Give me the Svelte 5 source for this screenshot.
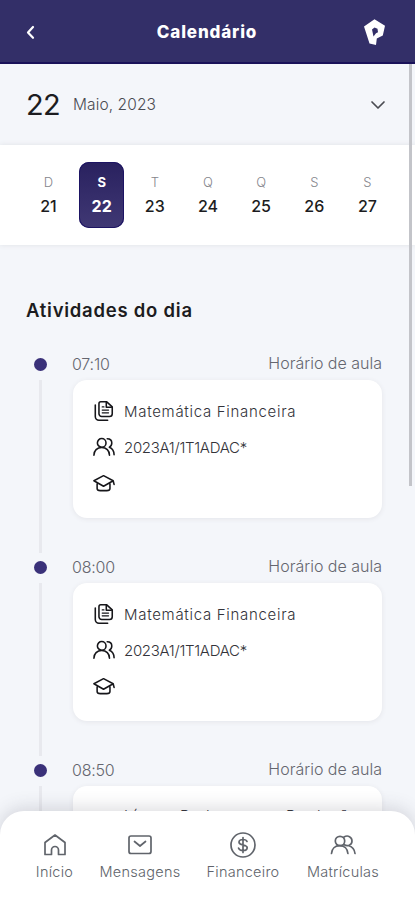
<script lang="ts">
    // Days shown in the week strip
    const days = [
        { letter: "D", number: 21 },
        { letter: "S", number: 22 },
        { letter: "T", number: 23 },
        { letter: "Q", number: 24 },
        { letter: "Q", number: 25 },
        { letter: "S", number: 26 },
        { letter: "S", number: 27 },
    ];

    let selected = $state(22);

    // long subjects wrap to a second line and need a taller row
    const activities = [
        { time: "07:10", subject: "Matemática Financeira", group: "2023A1/1T1ADAC*", long: false },
        { time: "08:00", subject: "Matemática Financeira", group: "2023A1/1T1ADAC*", long: false },
        { time: "08:50", subject: "Língua Portuguesa e Produção de Textos", group: "", long: true },
    ];
</script>

<div class="screen">
    <header>
        <button class="back" aria-label="Voltar">
            <svg width="10" height="16" viewBox="0 0 10 16"><path d="M8 3 3 8.500l5 5.300" /></svg>
        </button>
        <h1>Calendário</h1>
        <svg class="logo" width="24" height="28" viewBox="0 0 24 28">
            <path fill-rule="evenodd" d="M12.500 1.200 23 7.700 20.800 17.500 14.800 20.500 14 27 7.500 25.500 2 8.500ZM10 11.500 11.500 18.500 14 15.200 16 14.200 15.500 10.800 12.500 9.500Z" />
        </svg>
    </header>

    <div class="month">
        <span class="day-big">22</span>
        <span class="month-name">Maio, 2023</span>
        <svg width="16" height="10" viewBox="0 0 16 10"><path d="M2 2l6 6 6-6" /></svg>
    </div>

    <div class="week">
        {#each days as day}
            <button class="day" class:active={day.number === selected} onclick={() => (selected = day.number)}>
                <span class="letter">{day.letter}</span>
                <span class="number">{day.number}</span>
            </button>
        {/each}
    </div>

    <main>
        <h2>Atividades do dia</h2>
        {#each activities as activity}
            <section class="activity">
                <div class="rail">
                    <span class="dot"></span>
                    <span class="line"></span>
                </div>
                <div class="body">
                    <div class="top">
                        <span class="time">{activity.time}</span>
                        <span class="kind">Horário de aula</span>
                    </div>
                    <div class="card">
                        <div class="row" class:tall={activity.long}>
                            <svg width="22" height="22" viewBox="0 0 24 24">
                                <path d="M8.500 2H15l6 5.500V15a3 3 0 0 1-3 3H9.500a3 3 0 0 1-3-3V4a2 2 0 0 1 2-2Z" />
                                <path d="M14.500 2.500V8H20M2.500 5.500V18a4 4 0 0 0 4 4H16" />
                                <path class="thin" d="M10 7.500h2M10 11h7M10 14h7" />
                            </svg>
                            <span class="subject">{activity.subject}</span>
                        </div>
                        <div class="row">
                            <svg width="22" height="22" viewBox="0 0 24 24">
                                <circle cx="9.500" cy="7.500" r="4.700" />
                                <path d="M1 21c0-5 3.500-8.500 8.500-8.500S18 16 18 21M15.500 3c3 0 5 2 5 4.700 0 2.200-1.200 3.800-2.700 4.500 3.200 1.300 5.200 4.300 5.200 8.300" />
                            </svg>
                            {#if activity.group}
                                <span class="group">{activity.group}</span>
                            {/if}
                        </div>
                        <div class="row">
                            <svg width="22" height="22" viewBox="0 0 24 24">
                                <path d="M1 9.500 11.500 4 22 9.500 11.500 15.500ZM22 9.500l1 4M4.500 12.500v5.500c0 1.500 2 2.300 3.500 2.300h7c1.500 0 3.500-.8 3.500-2.300v-5.500" />
                            </svg>
                        </div>
                    </div>
                </div>
            </section>
        {/each}
    </main>

    <div class="scrollbar"></div>

    <nav>
        <a class="home" href="#inicio">
            <svg width="28" height="28" viewBox="0 0 28 28">
                <path d="M4 11.500 14 4l10 7.500V23.500h-6.500V19a3.500 3.500 0 0 0-7 0v4.500H4Z" />
            </svg>
            <span>Início</span>
        </a>
        <a class="messages" href="#mensagens">
            <svg width="28" height="28" viewBox="0 0 28 28">
                <rect x="3" y="5" width="22" height="17.500" rx="2" />
                <path d="M8.500 10.500 14 15l5.500-4.500" />
            </svg>
            <span>Mensagens</span>
        </a>
        <a class="finance" href="#financeiro">
            <svg width="28" height="28" viewBox="0 0 28 28">
                <circle cx="14" cy="14" r="12" />
                <path d="M18 10.500c-.5-1.500-2-2-4-2s-4 .8-4 2.700c0 3.800 8.200 1.800 8.200 5.500 0 2-1.800 2.800-4.200 2.800s-4-.8-4.500-2.500M14 6.500v15" />
            </svg>
            <span>Financeiro</span>
        </a>
        <a class="enroll" href="#matriculas">
            <svg width="28" height="28" viewBox="0 0 28 28">
                <circle cx="11" cy="10" r="4.700" />
                <path d="M2.500 22.500c.3-4.500 3.500-7.800 8.200-7.800s7.900 3.300 8.200 7.800M15 6c4-2.500 8 .2 8 4 0 4.200-4.500 6-8 3.500M20 14.800c3.500 1 5.500 3.800 6 7.700" />
            </svg>
            <span>Matrículas</span>
        </a>
    </nav>
</div>

<style>
    :global(body) {
        margin: 0;
    }

    .screen {
        position: relative;
        width: 415px;
        height: 900px;
        overflow: hidden;
        background: #f4f6fa;
        font-family: Inter, "Liberation Sans", sans-serif;
        color: #1c1c20;
    }

    svg {
        flex: none;
        fill: none;
        stroke: currentColor;
        stroke-width: 1.7;
        stroke-linecap: round;
        stroke-linejoin: round;
    }

    button {
        border: 0;
        padding: 0;
        background: none;
        font: inherit;
        color: inherit;
    }

    header {
        display: flex;
        align-items: center;
        justify-content: space-between;
        box-sizing: border-box;
        height: 64px;
        padding: 2px 29px 0 25px;
        background: #332f68;
        border-bottom: 2px solid #1a1259;
        color: #fff;
    }

    .back {
        display: flex;
        width: 27px;
    }

    .back svg {
        stroke-width: 2.2;
    }

    h1 {
        margin: 0;
        font-size: 17px;
        font-weight: 800;
        letter-spacing: 0.85px;
    }

    .logo {
        fill: #fff;
        stroke: none;
    }

    .month {
        display: flex;
        align-items: center;
        box-sizing: border-box;
        height: 81px;
        padding: 0 29px 0 26px;
    }

    .month svg {
        color: #4a4b52;
    }

    .day-big {
        width: 47px;
        font-size: 29px;
        letter-spacing: -0.6px;
    }

    .month-name {
        flex: 1;
        font-size: 15.5px;
        font-weight: 300;
        letter-spacing: 0.1px;
        color: #4a4b52;
    }

    .week {
        display: flex;
        justify-content: space-between;
        align-items: center;
        box-sizing: border-box;
        height: 100px;
        padding: 0 25px 0 26px;
        background: #fff;
        box-shadow: 0 0 5px #dfe1e6;
    }

    .day {
        display: flex;
        flex-direction: column;
        align-items: center;
        box-sizing: border-box;
        width: 45px;
        height: 66px;
        padding-top: 11px;
        border-radius: 10px;
    }

    .letter {
        font-size: 13px;
        line-height: 18px;
        font-weight: 300;
        color: #85858c;
    }

    .number {
        margin-top: 5px;
        font-size: 16px;
        line-height: 20px;
        font-weight: 500;
    }

    .active {
        background: linear-gradient(#29215f, #403874);
        box-shadow: inset 0 0 0 1px #1d1463;
    }

    .active .letter,
    .active .number {
        font-weight: 700;
        color: #fff;
    }

    main {
        padding: 52px 33px 0 26px;
    }

    h2 {
        margin: 0 0 29px;
        font-size: 18.5px;
        line-height: 26px;
        font-weight: 600;
        letter-spacing: 0.75px;
    }

    .activity {
        display: flex;
        height: 203px;
    }

    .rail {
        display: flex;
        flex-direction: column;
        align-items: center;
        width: 29px;
        margin-right: 17px;
    }

    .dot {
        width: 13px;
        height: 13px;
        margin: 6px 0 9px;
        border-radius: 50%;
        background: #3a3179;
    }

    .line {
        flex: 1;
        width: 3px;
        margin-bottom: 2px;
        background: #e8e9ee;
    }

    .body {
        flex: 1;
    }

    .top {
        display: flex;
        justify-content: space-between;
        height: 28px;
        font-size: 16px;
        line-height: 24px;
        font-weight: 300;
        color: #65666f;
    }

    .time {
        letter-spacing: -0.2px;
    }

    .kind {
        line-height: 23px;
    }

    .card {
        display: flex;
        flex-direction: column;
        box-sizing: border-box;
        height: 138px;
        margin-left: 1px;
        padding: 14px 20px 13px;
        border-radius: 14px;
        background: #fff;
        box-shadow: 0 1px 5px #e4e5ea;
    }

    .row {
        display: flex;
        flex: none;
        align-items: center;
        gap: 9px;
        height: 36px;
        font-size: 15px;
        line-height: 22px;
        font-weight: 300;
        color: #16161a;
    }

    .row svg {
        margin-top: -2px;
    }

    .row.tall {
        height: 54px;
    }

    .row .thin {
        stroke-width: 1.2;
    }

    .subject {
        letter-spacing: 0.7px;
        color: #33333a;
    }

    .group {
        letter-spacing: -0.3px;
        color: #33333a;
    }

    .scrollbar {
        position: absolute;
        top: 64px;
        right: 3px;
        width: 3px;
        height: 422px;
        background: #c3c4c9;
    }

    nav {
        position: absolute;
        left: 0;
        bottom: 0;
        display: flex;
        box-sizing: border-box;
        width: 415px;
        height: 89px;
        padding: 20px 21px 0;
        border-radius: 24px 24px 0 0;
        background: #fff;
        box-shadow: 0 -3px 18px rgba(60, 62, 75, 0.18);
    }

    a {
        display: flex;
        flex-direction: column;
        align-items: center;
        color: #60646b;
        font-size: 14.5px;
        font-weight: 300;
        letter-spacing: 0.25px;
        line-height: 26px;
        text-decoration: none;
    }

    .home {
        width: 67px;
    }

    .messages {
        width: 104px;
    }

    .finance {
        width: 102px;
    }

    .enroll {
        width: 98px;
    }
</style>
